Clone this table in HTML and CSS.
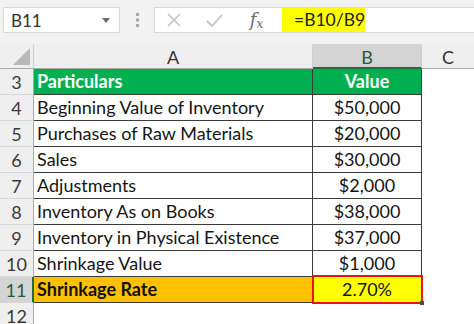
FILE: index.html
```html
<!DOCTYPE html>
<html>
<head>
<meta charset="utf-8">
<link rel="stylesheet" href="styles.css">
</head>
<body>
<div class="toolbar">
  <div class="namebox">
    <span class="nb-text">B11</span>
    <svg class="caret" width="8" height="5" viewBox="0 0 8 5"><path d="M0 0h8L4 5z" fill="#6b6b6b"/></svg>
  </div>
  <div class="grip">
    <svg width="3" height="14" viewBox="0 0 3 14"><rect x="0" y="0" width="3" height="3" fill="#a8a8a8"/><rect x="0" y="5.5" width="3" height="3" fill="#a8a8a8"/><rect x="0" y="11" width="3" height="3" fill="#a8a8a8"/></svg>
  </div>
  <div class="formula">
    <span class="fbtn">
      <svg width="14" height="14" viewBox="0 0 14 14"><path d="M1 1L13 13M13 1L1 13" stroke="#c4c4c4" stroke-width="1.6" fill="none"/></svg>
    </span>
    <span class="fbtn">
      <svg width="17" height="13" viewBox="0 0 17 13"><path d="M1 7L6 12L16 1" stroke="#c4c4c4" stroke-width="1.8" fill="none"/></svg>
    </span>
    <span class="fx">f<sub>x</sub></span>
    <span class="ftext">=B10/B9</span>
  </div>
</div>
<div class="sheet">
  <div class="corner"><span class="tri"></span></div>
  <div class="colh">A</div>
  <div class="colh sel">B</div>
  <div class="colh last">C</div>

  <div class="rowh">3</div>
  <div class="cell head">Particulars</div>
  <div class="cell head num">Value</div>
  <div class="empty"></div>

  <div class="rowh">4</div>
  <div class="cell">Beginning Value of Inventory</div>
  <div class="cell num">$50,000</div>
  <div class="empty"></div>

  <div class="rowh">5</div>
  <div class="cell">Purchases of Raw Materials</div>
  <div class="cell num">$20,000</div>
  <div class="empty"></div>

  <div class="rowh">6</div>
  <div class="cell">Sales</div>
  <div class="cell num">$30,000</div>
  <div class="empty"></div>

  <div class="rowh">7</div>
  <div class="cell">Adjustments</div>
  <div class="cell num">$2,000</div>
  <div class="empty"></div>

  <div class="rowh">8</div>
  <div class="cell">Inventory As on Books</div>
  <div class="cell num">$38,000</div>
  <div class="empty"></div>

  <div class="rowh">9</div>
  <div class="cell">Inventory in Physical Existence</div>
  <div class="cell num">$37,000</div>
  <div class="empty"></div>

  <div class="rowh">10</div>
  <div class="cell">Shrinkage Value</div>
  <div class="cell num">$1,000</div>
  <div class="empty"></div>

  <div class="rowh selrow">11</div>
  <div class="cell total">Shrinkage Rate</div>
  <div class="cell num result">2.70%</div>
  <div class="empty"></div>

  <div class="rowh">12</div>
  <div class="empty"></div>
  <div class="empty"></div>
  <div class="empty"></div>
</div>
</body>
</html>
```

FILE: styles.css
```css
* { box-sizing: border-box; }
html, body { margin: 0; padding: 0; }
body {
  width: 474px;
  height: 324px;
  overflow: hidden;
  background: #ffffff;
  font-family: Lato, "Open Sans", sans-serif;
  color: #1a1a1a;
}
.toolbar {
  height: 44px;
  background: #f2f2f2;
  display: flex;
  align-items: flex-start;
  padding: 7px 0 0 3px;
}
.namebox {
  width: 117px;
  height: 26px;
  background: #fff;
  border: 1px solid #d9d9d9;
  display: flex;
  align-items: center;
  justify-content: space-between;
  padding: 0 9px 0 7px;
}
.nb-text { font-size: 17px; color: #333; }
.caret { margin-top: 1px; }
.grip {
  width: 34px;
  height: 26px;
  display: flex;
  align-items: center;
  justify-content: center;
}
.formula {
  flex: 1;
  height: 26px;
  background: #fff;
  border: 1px solid #d9d9d9;
  border-right: none;
  display: flex;
  align-items: center;
}
.fbtn {
  width: 42px;
  display: flex;
  justify-content: center;
  align-items: center;
}
.fbtn:first-child { width: 38px; }
.fx {
  width: 47px;
  text-align: center;
  font-family: "DejaVu Serif", "Liberation Serif", serif;
  font-style: italic;
  font-size: 18px;
  color: #6a6a6a;
  padding-right: 4px;
}
.fx sub { font-size: 12px; vertical-align: -2px; }
.ftext {
  height: 24px;
  width: 83px;
  background: #ffff00;
  font-size: 17.5px;
  color: #222;
  padding-left: 12px;
  line-height: 24px;
}
.sheet {
  display: grid;
  grid-template-columns: 34px 279px 109px 1fr;
  grid-template-rows: 25px repeat(9, 26px) 1fr;
  height: 280px;
}
.corner {
  background: #efefef;
  border-right: 1px solid #cfcfcf;
  border-bottom: 1px solid #a9a9a9;
  position: relative;
}
.tri {
  position: absolute;
  right: 3px;
  bottom: 3px;
  width: 0;
  height: 0;
  border-left: 17px solid transparent;
  border-bottom: 17px solid #b9b9b9;
}
.colh {
  background: #efefef;
  border-right: 1px solid #cfcfcf;
  border-bottom: 1px solid #a9a9a9;
  text-align: center;
  font-size: 18px;
  line-height: 26px;
  color: #333;
}
.colh.sel {
  background: #d4d4d4;
  border-bottom: 2px solid #1f6e43;
  color: #2b5a3e;
}
.colh.last { border-right: none; }
.rowh {
  background: #efefef;
  border-right: 1px solid #a9a9a9;
  border-bottom: 1px solid #d6d6d6;
  text-align: center;
  font-size: 18px;
  line-height: 26px;
  color: #3a3a3a;
}
.rowh.selrow {
  background: #d4d4d4;
  border-right: 2px solid #1f6e43;
  color: #2b5a3e;
}
.cell {
  border-right: 1px solid #3b3b3b;
  border-bottom: 1px solid #3b3b3b;
  font-size: 18px;
  line-height: 25px;
  padding-left: 3px;
  white-space: nowrap;
  overflow: hidden;
  color: #151515;
}
.cell.num { text-align: center; padding-left: 0; }
.cell.head {
  background: #00b050;
  color: #ffffff;
  font-weight: bold;
}
.cell.total {
  background: #ffc000;
  font-weight: bold;
  color: #111;
}
.cell.result {
  background: #ffff00;
  position: relative;
  overflow: visible;
}
.cell.result::before {
  content: "";
  position: absolute;
  left: -1px;
  top: -2px;
  right: -2px;
  bottom: -2px;
  border: 2.5px solid #f01010;
}
.cell.result::after {
  content: "";
  position: absolute;
  right: -3px;
  bottom: -3px;
  width: 4px;
  height: 4px;
  background: #2f5e3f;
}
.empty { background: #fff; }
```
